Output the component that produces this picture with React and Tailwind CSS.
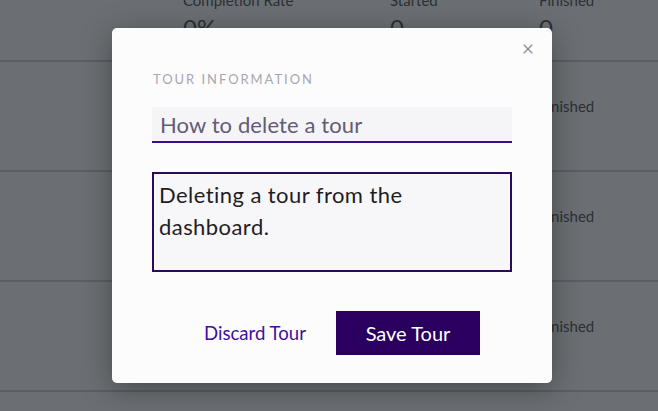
import { X } from "lucide-react";

// Edit-tour dialog over the (dimmed) tours dashboard.

const rows = [1, 2, 3];

function Dashboard() {
  return (
    <div className="min-h-[411px] bg-[#6b6f73] text-[#2c2f35] overflow-hidden">
      {/* stats header */}
      <div className="h-[71px] border-b-2 border-[#5b5e65] relative">
        <div className="flex -mt-[9px]">
          <div className="w-[183px]" />
          <div className="w-[207px]">
            <div className="text-[15px] leading-[18px]">Completion Rate</div>
            <div className="text-[24px] leading-[30px] mt-[4px]">0%</div>
          </div>
          <div className="w-[149px]">
            <div className="text-[15px] leading-[18px]">Started</div>
            <div className="text-[24px] leading-[30px] mt-[4px]">0</div>
          </div>
          <div>
            <div className="text-[15px] leading-[18px]">Finished</div>
            <div className="text-[24px] leading-[30px] mt-[4px]">0</div>
          </div>
        </div>
      </div>
      {rows.map((r) => (
        <div key={r} className="h-[110px] border-b-2 border-[#5b5e65] flex">
          <div className="ml-[539px] mt-[35px] text-[15px] leading-[18px]">Finished</div>
        </div>
      ))}
    </div>
  );
}

export default function App() {
  return (
    <div className="relative w-[658px] h-[411px] overflow-hidden font-['Lato','Liberation_Sans',sans-serif]">
      <Dashboard />
      <div className="absolute left-[112px] top-[28px] w-[440px] h-[355px] bg-[#fcfcfd] rounded-[5px] shadow-[0_6px_30px_rgba(0,0,0,0.35)] px-[40px] pt-[43px]">
        <button className="absolute right-[16px] top-[13px] text-[#8b8794]">
          <X size={16} strokeWidth={1.75} />
        </button>
        <div className="text-[13px] leading-[16px] tracking-[0.15em] text-[#a9a6ae] ml-[1px]">TOUR INFORMATION</div>
        <div className="mt-[20px] w-[360px] h-[36px] bg-[#f5f5f8] border-b-2 border-[#3b0d8f] pl-[8px] flex items-end pb-[1px]">
          <span className="text-[22px] leading-[30px] tracking-[0.005em] text-[#625c74]">How to delete a tour</span>
        </div>
        <div className="mt-[29px] w-[360px] h-[100px] bg-[#f7f7fa] border-2 border-[#2a0a5e] px-[5px] pt-[5px]">
          <p className="w-[270px] text-[22px] leading-[32px] tracking-[0.02em] text-[#1f1d24]">Deleting a tour from the dashboard.</p>
        </div>
        <div className="mt-[39px] flex items-center">
          <button className="ml-[52px] text-[18.6px] leading-[24px] text-[#3d0f9e]">Discard Tour</button>
          <button className="ml-[30px] w-[144px] h-[44px] bg-[#2a005e] text-white text-[20px] leading-[24px]">Save Tour</button>
        </div>
      </div>
    </div>
  );
}
